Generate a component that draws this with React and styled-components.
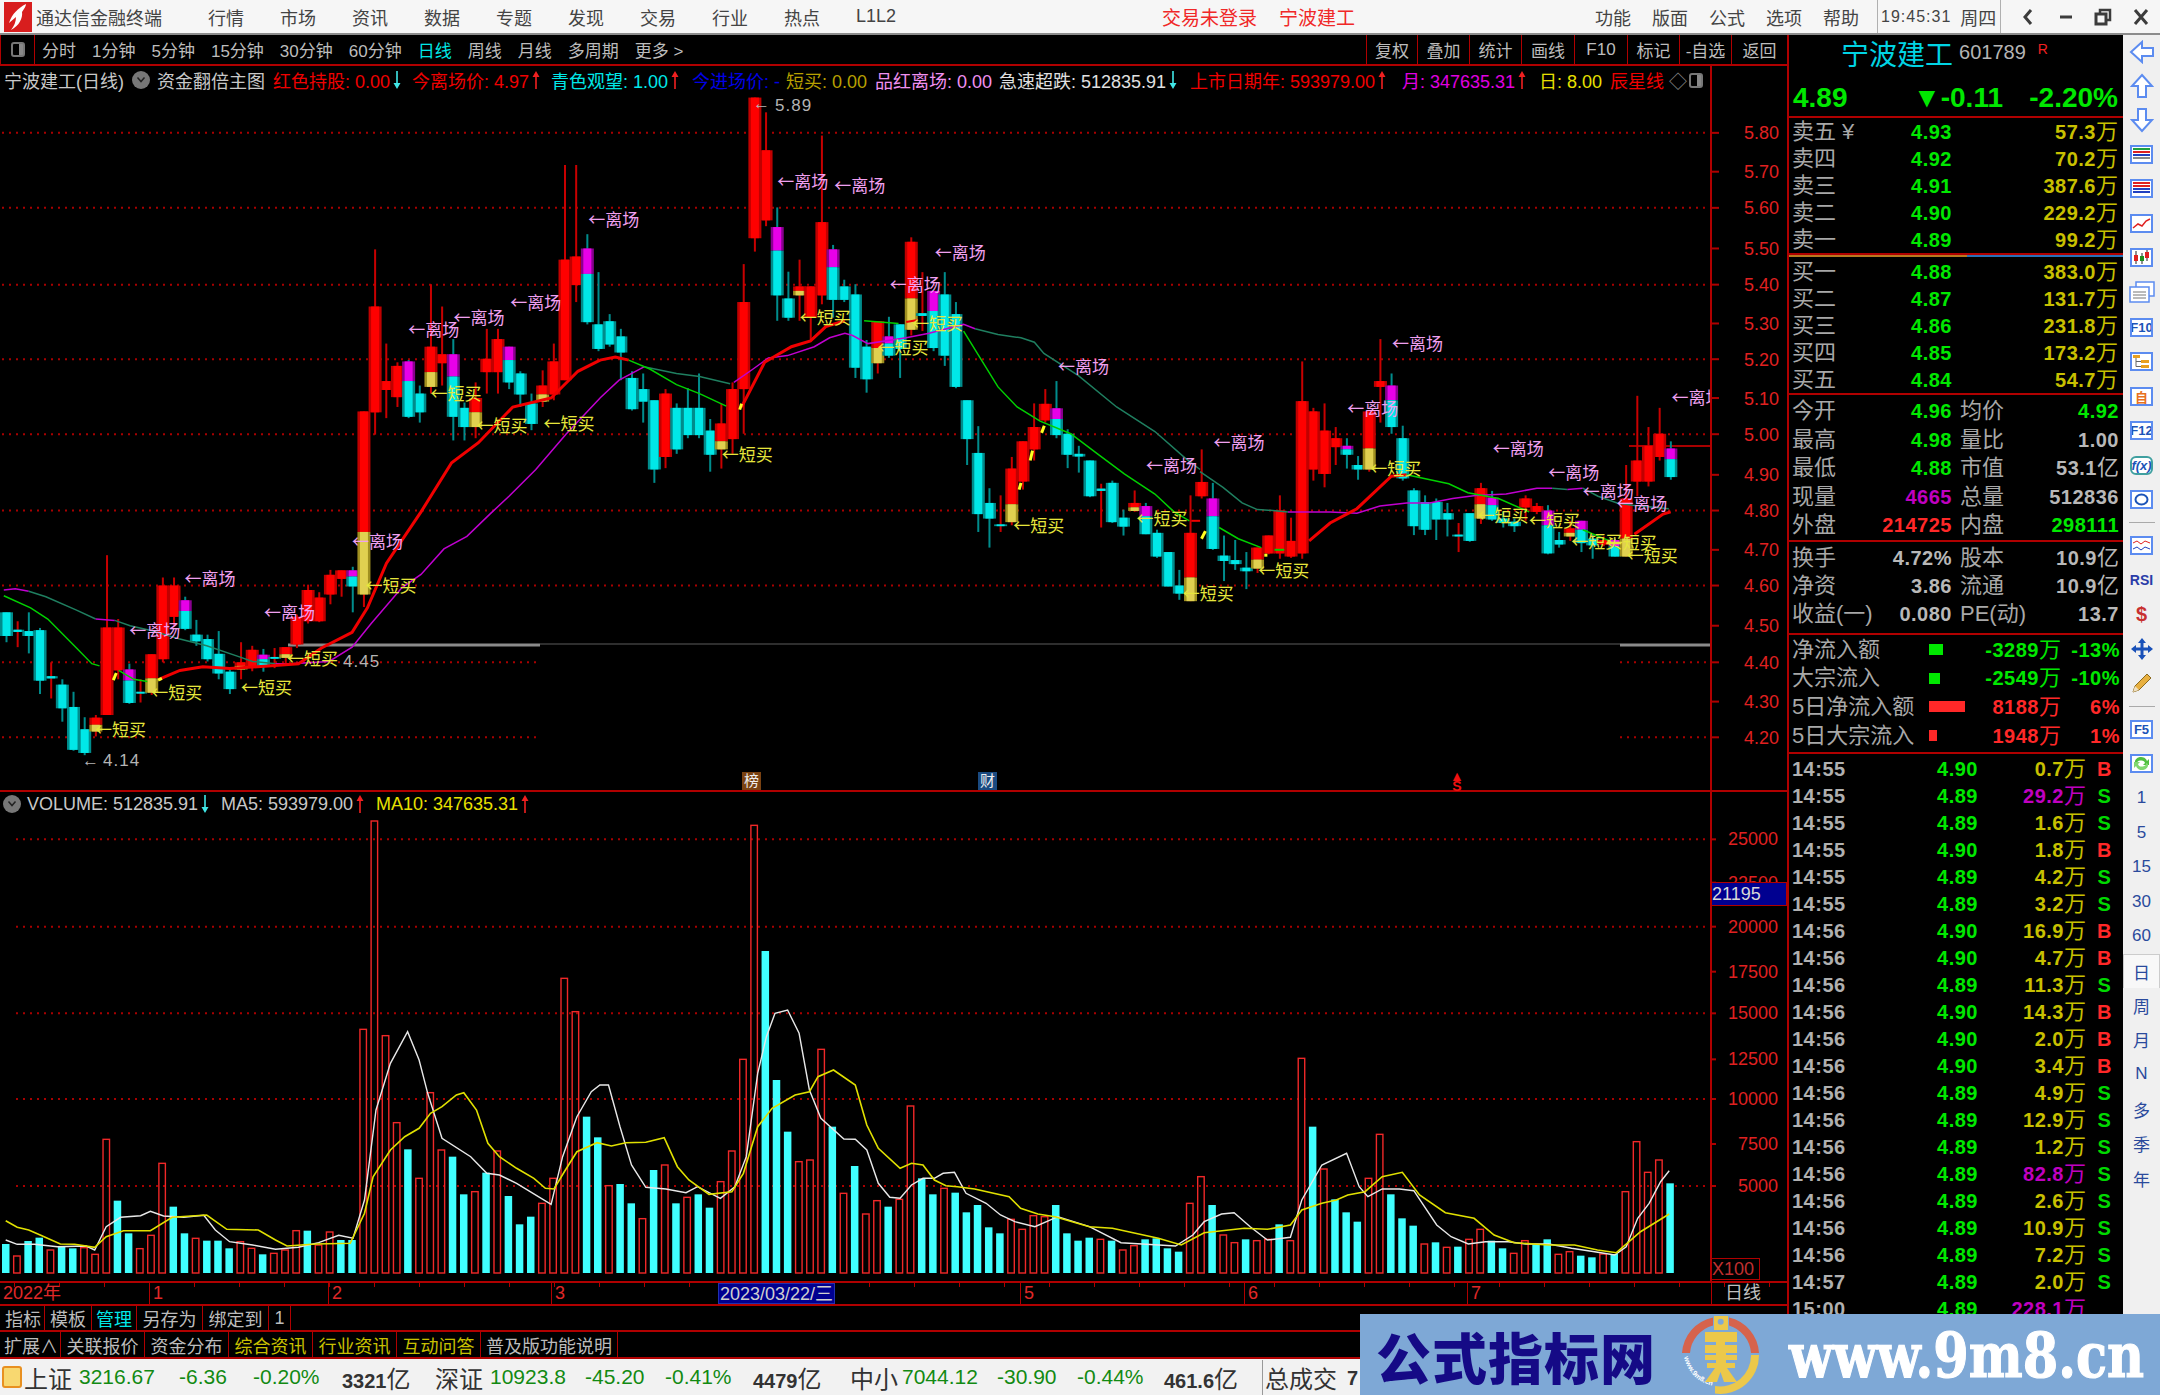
import React from "react";
import styled, { createGlobalStyle } from "styled-components";

const RED = "#b00000";
const CJK = '"Liberation Sans", "Noto Sans CJK SC", sans-serif';

const GlobalStyle = createGlobalStyle`
  html, body { margin: 0; padding: 0; background: #000; }
  body { font-family: ${CJK}; }
  * { box-sizing: border-box; }
`;

const Page = styled.div`
  position: relative;
  width: 2160px;
  height: 1395px;
  overflow: hidden;
  background: #000;
  display: flex;
  flex-direction: column;
`;

/* ---------- title bar ---------- */
const TitleBar = styled.div`
  height: 35px;
  flex: none;
  display: flex;
  align-items: center;
  background: #f6f6f6;
  border-bottom: 2px solid #8c8c8c;
  color: #444;
  font-size: 18px;
`;
const AppLogo = styled.div`
  width: 28px;
  height: 30px;
  margin-left: 4px;
  margin-right: 4px;
  flex: none;
`;
const AppName = styled.div`
  width: 150px;
  letter-spacing: 0;
`;
const MenuList = styled.div`
  display: flex;
  align-items: center;
  width: 700px;
  padding-left: 22px;
`;
const MenuItem = styled.div`
  width: 72px;
  text-align: left;
  flex: none;
`;
const LoginArea = styled.div`
  display: flex;
  gap: 22px;
  color: #f02828;
  font-size: 19px;
  margin-left: 276px;
  width: 433px;
`;
const SysMenu = styled.div`
  display: flex;
  gap: 21px;
  width: 282px;
`;
const Clock = styled.div`
  height: 33px;
  width: 124px;
  flex: none;
  display: flex;
  align-items: center;
  gap: 9px;
  padding-left: 3px;
  border-left: 1px solid #b0b0b0;
  border-right: 1px solid #b0b0b0;
  font-size: 16px;
  letter-spacing: 1px;
  span:last-child { font-size: 18px; letter-spacing: 0; }
`;
const WindowBtns = styled.div`
  flex: 1;
  display: flex;
  justify-content: space-around;
  align-items: center;
  padding-left: 8px;
`;

/* ---------- main layout ---------- */
const Main = styled.div`
  flex: 1;
  min-height: 0;
  display: flex;
`;
const LeftCol = styled.div`
  width: 1787px;
  flex: none;
  display: flex;
  flex-direction: column;
`;
const ToolRow = styled.div`
  height: 31px;
  flex: none;
  display: flex;
  align-items: center;
  border-bottom: 2px solid ${RED};
  color: #bcbcbc;
  font-size: 17px;
`;
const PanelToggle = styled.div`
  width: 35px;
  height: 29px;
  flex: none;
  border-right: 1px solid ${RED};
  border-left: 1px solid ${RED};
  display: flex;
  align-items: center;
  justify-content: center;
`;
const ToggleGlyph = styled.span`
  display: block;
  width: 14px;
  height: 15px;
  border: 2px solid #777;
  border-radius: 3px;
  background: linear-gradient(90deg, transparent 55%, #888 55%);
`;
const PeriodList = styled.div`
  flex: 1;
  display: flex;
  gap: 16px;
  padding-left: 7px;
`;
const Period = styled.span`
  color: ${(p) => (p.$on ? "#00e8e8" : "inherit")};
  white-space: nowrap;
`;
const ToolBtns = styled.div`
  display: flex;
  height: 29px;
`;
const ToolBtn = styled.div`
  width: ${(p) => p.$w}px;
  border-left: 1px solid ${RED};
  display: flex;
  align-items: center;
  justify-content: center;
`;

/* ---------- price and volume panes ---------- */
const ChartPane = styled.div`
  position: relative;
  height: ${(p) => p.$h}px;
  flex: none;
  border-bottom: 2px solid ${RED};
  svg { display: block; }
`;
const Legend = styled.div`
  position: absolute;
  left: ${(p) => p.$left}px;
  top: ${(p) => p.$top}px;
  right: 0;
  height: 26px;
  display: flex;
  align-items: center;
  font-size: 18px;
  white-space: nowrap;
  color: #c8c8c8;
`;
const LegendItem = styled.span`
  width: ${(p) => p.$w}px;
  flex: none;
  color: ${(p) => p.$c || "inherit"};
  display: inline-flex;
  align-items: center;
`;
const Circle = styled.span`
  width: 18px;
  height: 18px;
  border-radius: 50%;
  background: #777;
  color: #222;
  display: inline-flex;
  align-items: center;
  justify-content: center;
`;

const Gridline = styled.line`
  stroke: #a80000;
  stroke-width: 2;
  stroke-dasharray: 2 5;
`;
const AxisLabel = styled.text`
  fill: ${(p) => p.$c || "#e02020"};
  font-family: "Liberation Sans", sans-serif;
  font-size: ${(p) => p.$s || 19}px;
  dominant-baseline: central;
`;
const Mark = styled.text`
  font-family: "Noto Sans CJK SC", sans-serif;
  font-size: 17px;
  dominant-baseline: central;
  fill: ${(p) => (p.$kind === "buy" ? "#e6e63c" : "#f0a0f0")};
`;
const LowHigh = styled.text`
  font-family: "Liberation Sans", sans-serif;
  font-size: 17px;
  letter-spacing: 1px;
  dominant-baseline: central;
  fill: #b4b4b4;
`;
const NewsTag = styled.div`
  position: absolute;
  left: ${(p) => p.$x}px;
  bottom: 0;
  width: 19px;
  height: 18px;
  background: ${(p) => p.$bg};
  color: #eee;
  font-size: 15px;
  line-height: 18px;
  text-align: center;
`;
const DollarTag = styled.div`
  position: absolute;
  left: 1450px;
  bottom: -1px;
  color: #f01010;
  font-size: 14px;
  font-weight: bold;
  line-height: 10px;
  text-align: center;
`;
const PriceTag = styled.div`
  position: absolute;
  left: 1711px;
  top: 90px;
  width: 76px;
  height: 24px;
  background: #000090;
  border: 1px solid ${RED};
  color: #d8d8d8;
  font-size: 18px;
  line-height: 22px;
`;
const ScaleTag = styled.div`
  position: absolute;
  left: 1711px;
  bottom: 1px;
  width: 49px;
  height: 22px;
  border: 1px solid ${RED};
  color: #c03030;
  font-size: 18px;
  line-height: 20px;
`;

/* ---------- date axis and tab rows ---------- */
const DateAxis = styled.div`
  position: relative;
  height: 23px;
  flex: none;
  display: flex;
  border-bottom: 2px solid ${RED};
  background: repeating-linear-gradient(90deg, ${RED} 0 1px, transparent 1px 45px) 14px 0 / 100% 4px no-repeat;
`;
const DateCell = styled.div`
  width: ${(p) => p.$w}px;
  flex: none;
  padding-left: 3px;
  border-left: ${(p) => (p.$first ? "none" : `1px solid ${RED}`)};
  color: ${(p) => p.$c || "#e02828"};
  font-size: 18px;
  line-height: 21px;
`;
const DateCursor = styled.div`
  position: absolute;
  left: 718px;
  top: 0;
  width: 117px;
  height: 21px;
  background: #000090;
  color: #d0d0d0;
  font-size: 18px;
  line-height: 20px;
  text-align: center;
  border: 1px solid #2030b0;
  white-space: nowrap;
`;
const TabRow = styled.div`
  height: ${(p) => p.$h}px;
  flex: none;
  display: flex;
  padding-left: 2px;
  border-bottom: 2px solid ${RED};
`;
const Tab = styled.div`
  width: ${(p) => p.$w}px;
  flex: none;
  display: flex;
  align-items: center;
  justify-content: center;
  border-right: 1px solid ${RED};
  color: ${(p) => p.$c || "#bcbcbc"};
  font-size: 18px;
`;

/* ---------- quote panel ---------- */
const Panel = styled.div`
  width: 336px;
  flex: none;
  border-left: 2px solid ${RED};
  display: flex;
  flex-direction: column;
  color: #a8a8a8;
  overflow: hidden;
`;
const NameRow = styled.div`
  height: 31px;
  flex: none;
  display: flex;
  align-items: center;
  padding: 4px 0 0 52px;
  gap: 6px;
`;
const StockName = styled.span`
  color: #00d4e4;
  font-size: 28px;
`;
const StockCode = styled.span`
  color: #b4b4b4;
  font-size: 20px;
`;
const RBadge = styled.span`
  color: #f02020;
  font-size: 14px;
  margin: -8px 0 0 6px;
`;
const QuoteRow = styled.div`
  height: 52px;
  flex: none;
  padding: 16px 5px 0 4px;
  border-bottom: 2px solid ${RED};
  color: #00e800;
  font-size: 28px;
  font-weight: bold;
  display: grid;
  grid-template-columns: 120px 1fr 110px;
  span:nth-child(3) { text-align: right; }
`;
const Section = styled.div`
  flex: none;
  padding-top: ${(p) => p.$pt || 0}px;
  padding-bottom: ${(p) => p.$pb || 0}px;
  border-bottom: ${(p) => (p.$noline ? "none" : `2px solid ${RED}`)};
`;
const SplitLine = styled.div`
  height: 2px;
  flex: none;
  background: linear-gradient(90deg, #b87a20 0 178px, #2a70b8 178px);
`;
const Row = styled.div`
  height: ${(p) => p.$h}px;
  display: grid;
  grid-template-columns: ${(p) => p.$cols};
  align-items: center;
  padding-left: 3px;
  font-size: 22px;
  line-height: 22px;
  white-space: nowrap;
`;
const Num = styled.span`
  color: ${(p) => p.$c || "#00e800"};
  font-family: "Liberation Sans", "Noto Sans CJK SC", sans-serif;
  font-size: 20px;
  font-weight: bold;
  letter-spacing: 0.5px;
  text-align: ${(p) => p.$align || "right"};
  justify-self: ${(p) => (p.$align === "left" ? "start" : p.$align === "center" ? "center" : "end")};
  padding-right: ${(p) => p.$pr || 0}px;
  i {
    font-style: normal;
    font-weight: normal;
    font-size: 22px;
    letter-spacing: 0;
  }
`;
const FlowBar = styled.span`
  display: block;
  height: 11px;
  background: ${(p) => p.$c};
`;

/* ---------- right icon strip ---------- */
const Strip = styled.div`
  flex: 1;
  background: #f0f0f0;
  display: flex;
  flex-direction: column;
  align-items: center;
  color: #2a4a9c;
`;
const StripCell = styled.div`
  height: ${(p) => p.$h || 34.55}px;
  width: 100%;
  flex: none;
  display: flex;
  align-items: center;
  justify-content: center;
  font-size: 17px;
  ${(p) => p.$on && `background:#f8f8f8;border:1px solid #ccc;border-bottom:none;`}
`;
const StripSep = styled.div`
  width: 26px;
  height: 1px;
  margin: 5px 0;
  flex: none;
  background: #aaa;
`;
const IconBox = styled.span`
  width: 23px;
  height: 19px;
  background: #fff;
  border: 2px solid ${(p) => p.$bc || "#5c8cf0"};
  border-radius: ${(p) => p.$r || 0}px;
  display: flex;
  align-items: center;
  justify-content: center;
  font-size: 13px;
  color: ${(p) => p.$c || "#1c54b8"};
  font-weight: bold;
  font-style: ${(p) => (p.$italic ? "italic" : "normal")};
  overflow: hidden;
`;
const BoldGlyph = styled.span`
  color: ${(p) => p.$c};
  font-size: ${(p) => p.$s || 14}px;
  font-weight: bold;
`;

/* ---------- status bar and watermark ---------- */
const StatusBar = styled.div`
  height: 36px;
  flex: none;
  background: #f2f2f2;
  display: flex;
  align-items: center;
  padding-left: 2px;
  font-size: 24px;
  color: #333;
  white-space: nowrap;
`;
const StatusIcon = styled.span`
  width: 20px;
  height: 22px;
  margin-right: 2px;
  flex: none;
  border: 2px solid #e89020;
  border-radius: 3px;
  background: #f8d870;
`;
const StatusCell = styled.span`
  width: ${(p) => p.$w}px;
  flex: none;
  color: ${(p) => p.$c || "inherit"};
  font-size: ${(p) => p.$s || 24}px;
  border-left: ${(p) => (p.$divider ? "1px solid #999" : "none")};
  padding-left: ${(p) => (p.$divider ? 2 : 0)}px;
  b {
    font-size: 20px;
    font-family: "Liberation Sans", sans-serif;
  }
`;
const Watermark = styled.div`
  position: absolute;
  right: 0;
  bottom: 0;
  width: 800px;
  height: 81px;
  background: #7ea8d6;
  display: flex;
  align-items: center;
  padding-left: 16px;
`;
const WmTitle = styled.div`
  width: 284px;
  flex: none;
  color: #150a86;
  font-family: "Noto Sans CJK SC", sans-serif;
  font-size: 55px;
  font-weight: 900;
  letter-spacing: 1px;
  line-height: 70px;
  white-space: nowrap;
`;
const WmUrl = styled.div`
  margin-left: 9px;
  color: #fff;
  font-family: "DejaVu Serif", serif;
  font-weight: bold;
  font-size: 51px;
  -webkit-text-stroke: 1px #fff;
  transform: scaleY(1.2);
  white-space: nowrap;
`;

/* ---------- chart data, read off the picture ---------- */
const STEP = 11.17;
const cx = (i) => 6.5 + i * STEP;
const py = (Y) => 90 + Y / 2.24;
const vy = (Y) => 790 + Y / 3;

// [bodyTop, bodyBottom, wickTop, wickBottom, kind, split]
// c cyan, r red, m cyan with magenta head, y red with yellow foot, d thin doji
const CANDLES = [
  [1170,1223,1170,1237,"c"],[1209,1214,1190,1248,"d"],[1212,1223,1170,1262,"c"],[1210,1323,1205,1353,"c"],
  [1313,1318,1282,1363,"d"],[1332,1385,1320,1415,"c"],[1382,1478,1348,1480,"c"],[1432,1485,1405,1490,"c"],
  [1406,1437,1400,1448,"y",1422],[1204,1400,1042,1400,"r"],[1204,1300,1185,1320,"r"],[1298,1373,1285,1375,"m",1323],
  [1348,1352,1320,1372,"d"],[1264,1350,1264,1355,"y",1318],[1110,1275,1092,1282,"r"],[1110,1180,1092,1200,"r"],
  [1143,1207,1135,1210,"m",1167],[1220,1235,1187,1245,"c"],[1230,1275,1220,1280,"c"],[1263,1307,1212,1320,"c"],
  [1303,1342,1295,1353,"c"],[1282,1298,1237,1320,"y",1290],[1254,1292,1245,1302,"r"],[1265,1292,1252,1303,"m",1275],
  [1270,1274,1250,1295,"d"],[1248,1272,1248,1285,"y",1264],[1180,1242,1175,1250,"r"],[1120,1190,1108,1195,"r"],
  [1137,1190,1125,1192,"r"],[1086,1130,1075,1152,"r"],[1076,1095,1076,1135,"r"],[1076,1112,1068,1170,"m",1090],
  [720,1130,720,1158,"y",990],[485,722,357,772,"r"],[652,672,568,735,"r"],[618,688,610,710,"r"],
  [608,732,605,735,"m",652],[680,722,662,745,"c"],[575,665,435,680,"y",632],[592,612,485,662,"r"],
  [592,732,558,785,"m",642],[712,755,700,785,"c"],[690,755,655,780,"y",722],[602,632,535,680,"r"],
  [558,632,535,680,"r"],[575,655,575,670,"m",605],[635,682,630,710,"c"],[702,748,680,762,"c"],
  [662,698,628,710,"y",682],[608,682,568,695,"r"],[380,650,168,650,"r"],[373,437,168,475,"r"],
  [355,520,323,525,"m",412],[525,580,408,585,"c"],
  // second stretch
  [518,570,502,575,"c"],[552,588,535,650,"c"],[645,715,630,718,"c"],[670,698,635,745,"c"],
  [695,850,695,880,"c"],[680,822,670,847,"r"],[712,805,702,815,"c"],[712,773,668,780,"c"],
  [712,773,635,780,"c"],[763,817,737,855,"c"],[747,805,703,848,"y",787],[670,782,655,815,"r"],
  [475,670,390,770,"r"],[17,332,17,362,"r"],[135,292,50,305,"r"],[307,460,263,517,"m",360],
  [467,510,407,517,"c"],[440,460,380,517,"y",450],[440,510,440,558,"r"],[296,460,102,480,"r"],
  [357,470,347,510,"m",397],[440,470,425,475,"c"],[458,622,435,645,"c"],[575,648,560,678,"c"],
  [518,612,518,635,"y",578],[552,595,508,600,"m",568],[525,580,525,645,"c"],[340,537,330,550,"y",467],
  [500,506,408,540,"d"],[450,578,450,585,"m",495],[458,595,408,618,"c"],[502,665,475,668,"c"],
  [695,782,695,840,"c"],[813,950,753,990,"c"],[925,960,892,1025,"c"],[973,977,908,990,"d"],
  [848,968,822,975,"y",928],[787,877,787,895,"r"],[755,805,702,830,"r"],[703,740,670,745,"r"],
  [713,773,652,780,"m",737],[770,817,760,847,"c"],[815,821,797,857,"c"],[830,910,830,912,"c"],
  [893,898,882,980,"d"],[880,968,875,970,"c"],[958,978,940,998,"c"],[925,943,897,945,"y",935],
  [932,995,925,995,"m",955],[992,1045,985,1048,"c"],[1035,1112,1035,1112,"c"],[1110,1128,1075,1142,"c"],
  [992,1145,908,1145,"y",1092],
  // third stretch
  [878,910,805,915,"r"],[915,1028,880,1030,"m",955],[1043,1055,998,1100,"c"],[1053,1062,1008,1075,"c"],
  [1070,1078,1035,1118,"c"],[1025,1072,1025,1082,"y",1052],[998,1038,998,1040,"r"],[942,1038,908,1050,"r"],
  [1010,1045,958,1048,"r"],[697,1038,608,1050,"r"],[720,850,712,875,"r"],[763,860,702,890,"r"],
  [780,800,755,840,"r"],[797,817,780,848,"m",805],[840,850,820,873,"c"],[720,850,720,855,"y",803],
  [652,665,558,745,"r"],[662,755,635,770,"m",695],[780,870,752,875,"c"],[897,977,892,997,"c"],
  [923,985,908,997,"c"],[923,962,915,1008,"c"],[948,962,925,1000,"c"],[996,1000,970,1035,"d"],
  [948,1010,948,1012,"c"],[892,960,880,972,"y",928],[913,962,898,965,"m",930],[960,970,945,980,"c"],
  [967,977,960,990,"c"],[915,935,908,965,"r"],[932,945,925,950,"r"],[942,1038,930,1040,"m",975],
  [1008,1018,990,1025,"c"],[982,1000,965,1010,"y",992],[965,1015,965,1035,"m",985],[1005,1020,995,1050,"c"],
  [1008,1018,1000,1022,"r"],[1008,1045,1005,1045,"m",1022],[915,1045,840,1045,"y",1005],[830,877,685,910,"r"],
  [797,877,755,888,"r"],[770,822,712,830,"r"],[803,867,787,873,"m",827],
];

// top of each volume bar, zoom units; negative = cyan bar, positive = hollow red
const VOLUME = [
  -1362,1398,-1353,-1343,1380,-1370,-1375,1373,1393,1048,-1232,-1330,1376,1336,1120,-1250,-1330,1345,-1352,-1352,
  -1375,1355,1375,-1393,1390,1380,1322,-1322,1365,1326,-1350,-1350,718,93,737,998,-1078,1165,908,1080,
  -1100,-1213,1205,-1148,1083,-1218,-1303,-1280,1240,1165,565,665,-980,-1042,1187,-1182,-1240,1286,-1140,1125,
  -1240,1222,-1213,-1253,1175,1083,808,106,-483,-870,-1025,1115,1110,778,-1010,1210,-1128,1272,1232,-1250,1228,
  948,-1165,-1213,1195,-1208,-1267,-1245,-1312,-1330,1288,1318,1277,1280,-1245,-1330,-1352,-1343,1348,-1352,1380,
  1367,-1348,-1345,-1375,-1385,1240,1160,-1245,1335,1358,-1348,1352,1348,-1303,1352,805,-1010,1137,-1228,-1267,
  -1295,1165,1033,-1213,-1285,-1307,1362,-1357,1372,-1370,1348,1318,-1352,-1375,1390,1352,-1365,-1348,1393,1385,
  -1397,-1402,1392,-1392,1205,1055,1147,1110,-1180,
];

const pts = (off, list) => {
  const out = [];
  for (let i = 0; i < list.length; i += 2) out.push(`${(off + list[i] / 2.613).toFixed(1)},${py(list[i + 1]).toFixed(1)}`);
  return out.join(" ");
};
const vpts = (a, b) => {
  const out = [];
  for (let i = 0; i < a.length; i += 2) out.push(`${(a[i] / 1.742).toFixed(1)},${vy(a[i + 1]).toFixed(1)}`);
  for (let i = 0; i < b.length; i += 2) out.push(`${(900 + b[i] / 1.742).toFixed(1)},${vy(b[i + 1]).toFixed(1)}`);
  return out.join(" ");
};

const DKG = "#1f7f60";
const MAG = "#c000d0";
const GRN = "#00d000";
const THICK = "#f00000";
const LINES = [
  [MAG,1.5,0,[10,1120,40,1117,75,1123]],
  [DKG,1.5,0,[75,1123,120,1135,200,1165,250,1185]],
  [MAG,1.5,0,[250,1185,300,1188]],
  [DKG,1.5,0,[300,1188,340,1200,400,1212,470,1230,540,1245,620,1268,660,1280,720,1285]],
  [MAG,1.5,0,[720,1285,760,1285,860,1280,920,1248,970,1195,1050,1115,1100,1085,1160,1028,1220,1000,1280,950,1330,910,1400,850,1480,770,1568,690]],
  [MAG,1.5,600,[0,690,50,650,115,620]],
  [DKG,1.5,600,[115,620,200,635,260,642,340,658]],
  [MAG,1.5,600,[350,655,400,625,440,600,490,595,560,575,600,555,640,545,660,550,700,568,800,555,860,545,950,525,980,535]],
  [DKG,1.5,600,[980,535,1040,548,1100,555,1135,565,1160,590,1250,640,1350,710,1450,765,1530,825,1568,850]],
  [DKG,1.5,1200,[0,855,60,890,110,925,150,940,190,942,230,945]],
  [MAG,1.5,1200,[230,945,340,945,410,948,470,932,540,925,600,925,660,915,720,908,800,905,880,892,920,892]],
  [DKG,1.5,1200,[920,892,960,895]],
  [MAG,1.5,1200,[960,895,1000,892]],
  [DKG,1.5,1200,[1000,892,1040,910,1090,925,1130,930,1225,938]],

  [GRN,1.5,0,[10,1133,80,1160,125,1185,200,1250,240,1285,260,1290]],
  [GRN,1.5,0,[310,1300,350,1320,385,1325]],
  [THICK,3,0,[415,1320,470,1300,530,1292,600,1296,700,1290,780,1285,840,1250,920,1215,960,1160,1010,1060,1100,945,1180,835,1250,790,1340,710,1440,690,1510,630,1568,605]],
  [THICK,3,600,[0,605,40,598,75,605]],
  [GRN,1.5,600,[75,605,130,625,200,660,260,680,330,708]],
  [THICK,3,600,[370,710,430,610,500,575,550,562,590,530,640,517]],
  [GRN,1.5,600,[690,517,780,523]],
  [THICK,2,600,[800,520,830,515]],
  [GRN,1.5,600,[950,540,1040,665,1090,710,1150,742,1230,770,1300,815,1370,860,1450,905,1500,945,1540,965]],
  [THICK,2,600,[1545,965,1568,965]],
  [GRN,1.5,1200,[50,980,100,1005,160,1025]],
  [GRN,2,1200,[195,1030,220,1030]],
  [THICK,3,1200,[285,1010,340,970,410,938,500,865,540,862]],
  [GRN,1.5,1200,[540,862,650,882,700,902,780,915,860,945]],
  [GRN,1.5,1200,[1000,985,1070,1010]],
  [THICK,3,1200,[1135,995,1210,950,1230,945]],
  // short yellow ticks where the line turns
  ["#ffff20",3,0,[296,1322,304,1306]],
  ["#ffff20",3,0,[413,1322,423,1318]],
  ["#ffff20",3,600,[365,716,370,703]],
  ["#ffff20",3,600,[1095,895,1100,880]],
  ["#ffff20",3,600,[1124,830,1130,808]],
  ["#ffff20",3,600,[1154,768,1161,752]],
  ["#ffff20",3,1200,[4,1005,14,988]],
  ["#ffff20",3,1200,[168,1042,176,1042]],
];

const EXITS = [
  [0,482,1095],[0,338,1212],[0,690,1172],[0,920,1012],[0,1067,537],[0,1185,510],[0,1333,477],[0,1537,292],
  [600,463,205],[600,612,215],[600,875,365],[600,757,437],[600,1197,620],[600,1427,843],
  [1200,35,790],[1200,385,715],[1200,502,570],[1200,765,805],[1200,910,858],[1200,1000,900],[1200,1088,927],[1200,1232,690],
];
const BUYS = [
  [0,248,1433],[0,395,1350],[0,630,1340],[0,750,1275],[0,955,1112],[0,1125,680],[0,1245,753],[0,1420,748],
  [600,318,817],[600,522,510],[600,725,578],[600,815,525],[600,1080,977],[600,1402,960],
  [1200,-45,1128],[1200,152,1078],[1200,445,850],[1200,725,955],[1200,860,965],[1200,970,1012],[1200,1060,1015],[1200,1115,1043],
];

const PRICE_TICKS = ["5.80","5.70","5.60","5.50","5.40","5.30","5.20","5.10","5.00","4.90","4.80","4.70","4.60","4.50","4.40","4.30","4.20"];
const PRICE_Y = [96,183,264,355,436,523,603,690,771,862,942,1030,1110,1200,1282,1370,1450];
const FULL_GRID = [96,264,436,603,771,942,1110];

const Candle = ({ i, d }) => {
  const [top, bot, wt, wb, kind, split] = d;
  const x = cx(i);
  const isRed = kind === "r" || kind === "y";
  const wick = isRed ? "#c80000" : kind === "d" ? "#c80000" : "#008c8c";
  const y1 = py(top);
  const y2 = py(bot);
  const part = (a, b, edge, fill) => (
    <>
      <rect x={x - 6.5} y={a} width={13} height={b - a} fill={edge} />
      <rect x={x - 4} y={a} width={8} height={b - a} fill={fill} />
    </>
  );
  return (
    <g>
      <rect x={x - 1} y={py(wt)} width={2} height={py(wb) - py(wt)} fill={wick} />
      {kind === "c" && part(y1, y2, "#008c8c", "#00e8e8")}
      {kind === "d" && part(y1, y2, "#008c8c", "#00e8e8")}
      {kind === "r" && part(y1, y2, "#c00000", "#ff0000")}
      {kind === "m" && (
        <>
          {part(y1, py(split), "#8a0090", "#e800e8")}
          {part(py(split), y2, "#008c8c", "#00e8e8")}
        </>
      )}
      {kind === "y" && (
        <>
          {part(y1, py(split), "#c00000", "#ff0000")}
          {part(py(split), y2, "#a09020", "#e0d050")}
        </>
      )}
    </g>
  );
};

const PriceChart = () => (
  <svg width="1787" height="724" viewBox="0 66 1787 724">
    <defs>
      <clipPath id="plot">
        <rect x="0" y="66" width="1711" height="724" />
      </clipPath>
    </defs>
    {FULL_GRID.map((Y) => (
      <Gridline key={Y} x1="2" x2="1711" y1={py(Y)} y2={py(Y)} />
    ))}
    {[1282, 1450].map((Y) => (
      <g key={Y}>
        <Gridline x1="2" x2="540" y1={py(Y)} y2={py(Y)} />
        <Gridline x1="1620" x2="1711" y1={py(Y)} y2={py(Y)} />
      </g>
    ))}
    <line x1="288" x2="540" y1="645" y2="645" stroke="#8a8a8a" strokeWidth="3" />
    <line x1="540" x2="1620" y1="644" y2="644" stroke="#5c5c5c" strokeWidth="1" />
    <line x1="1620" x2="1711" y1="645" y2="645" stroke="#8a8a8a" strokeWidth="3" />
    <line x1="1629" x2="1711" y1="446" y2="446" stroke="#e00000" strokeWidth="1.5" />

    {CANDLES.map((d, i) => (
      <Candle key={i} i={i} d={d} />
    ))}
    {LINES.map(([c, w, off, list], i) => (
      <polyline key={i} points={pts(off, list)} fill="none" stroke={c} strokeWidth={w} />
    ))}

    <g clipPath="url(#plot)">
      {EXITS.map(([off, X, Y], i) => (
        <Mark key={i} x={off + X / 2.613} y={py(Y) - 1.5}>←离场</Mark>
      ))}
      {BUYS.map(([off, X, Y], i) => (
        <Mark key={i} $kind="buy" x={off + X / 2.613} y={py(Y) - 1.5}>←短买</Mark>
      ))}
      <LowHigh x="82" y={py(1503)}>←</LowHigh>
      <LowHigh x="103" y={py(1503)}>4.14</LowHigh>
      <LowHigh x="343" y={py(1280)}>4.45</LowHigh>
      <LowHigh x="753" y={py(30)}>←</LowHigh>
      <LowHigh x="775" y={py(35)}>5.89</LowHigh>
    </g>

    <rect x="1710" y="66" width="2" height="724" fill={RED} />
    {PRICE_TICKS.map((t, i) => (
      <g key={t}>
        <rect x="1711" y={py(PRICE_Y[i]) - 1} width="8" height="2" fill={RED} />
        <AxisLabel x="1744" y={py(PRICE_Y[i])} textLength="35" lengthAdjust="spacingAndGlyphs">{t}</AxisLabel>
      </g>
    ))}
  </svg>
);

const VOL_GRID = [148, 410, 670, 927, 1188];
const VOL_LABELS = [
  ["25000", 148], ["22500", 278], ["20000", 410], ["17500", 545], ["15000", 670], ["12500", 808], ["10000", 927], ["7500", 1062], ["5000", 1188],
];
const WHITE_A = [10,1350,30,1363,60,1363,100,1370,150,1368,165,1380,185,1310,210,1282,245,1277,262,1264,285,1278,320,1282,355,1276,375,1320,400,1355,440,1365,480,1378,520,1372,555,1358,590,1336,615,1345,635,1230,655,960,680,820,710,725,730,810,745,910,770,1045,820,1100,848,1150,870,1155,900,1180,960,1243,980,1100,1005,980,1030,905,1045,885,1060,885,1080,1010,1100,1125,1125,1192,1160,1197,1195,1208,1215,1190,1255,1225,1280,1190,1300,1100,1320,850,1335,740,1350,670,1372,660,1392,730,1410,900,1430,985,1470,1047,1490,1048,1510,1080,1530,1180,1550,1222,1568,1225];
const WHITE_B = [20,1185,40,1165,60,1165,75,1150,95,1147,115,1210,150,1240,175,1275,200,1295,235,1310,275,1280,330,1310,385,1358,480,1368,510,1335,530,1295,560,1272,582,1268,610,1310,640,1350,680,1342,700,1230,735,1125,778,1090,800,1190,815,1220,840,1197,870,1197,895,1202,935,1305,960,1340,990,1362,1020,1355,1060,1355,1090,1362,1130,1362,1170,1375,1210,1385,1245,1395,1265,1370,1285,1285,1305,1240,1325,1175,1340,1142];
const YELLOW_A = [10,1292,30,1312,50,1320,70,1335,105,1362,130,1363,165,1372,185,1340,215,1322,262,1322,300,1282,360,1275,395,1318,450,1320,480,1350,500,1368,550,1362,610,1360,635,1270,650,1160,680,1080,705,1040,730,1015,750,970,770,950,795,915,808,908,830,960,850,1060,870,1100,900,1135,930,1165,950,1195,965,1197,985,1140,1005,1085,1040,1058,1065,1068,1090,1058,1125,1057,1157,1043,1180,1130,1200,1170,1235,1213,1275,1205,1295,1150,1320,1010,1345,955,1385,915,1410,905,1425,860,1452,840,1490,885,1510,1005,1530,1075,1568,1135];
const YELLOW_B = [20,1120,40,1125,60,1170,80,1187,100,1190,130,1197,190,1220,210,1255,240,1272,270,1280,330,1310,370,1315,450,1345,490,1365,530,1328,600,1315,640,1318,680,1305,700,1260,735,1240,760,1230,780,1215,810,1205,840,1160,875,1147,905,1215,950,1268,1000,1285,1035,1335,1070,1358,1130,1365,1175,1365,1215,1380,1248,1388,1290,1325,1340,1272];

const VolumeChart = () => (
  <svg width="1787" height="489" viewBox="0 792 1787 489">
    {VOL_GRID.map((Y) => (
      <Gridline key={Y} x1="16" x2="1711" y1={vy(Y)} y2={vy(Y)} />
    ))}
    {VOLUME.map((v, i) => {
      const x = 5.5 + i * STEP;
      const top = vy(Math.abs(v));
      return v < 0 ? (
        <rect key={i} x={x - 3.5} y={top} width={7.5} height={1273 - top} fill="#40ffff" />
      ) : (
        <rect key={i} x={x - 3} y={top} width={6.5} height={1273 - top} fill="none" stroke="#f02828" strokeWidth="1.4" />
      );
    })}
    <polyline points={vpts(WHITE_A, WHITE_B)} fill="none" stroke="#e8e8e8" strokeWidth="1.4" />
    <polyline points={vpts(YELLOW_A, YELLOW_B)} fill="none" stroke="#e0e000" strokeWidth="1.6" />
    <rect x="1710" y="792" width="2" height="489" fill={RED} />
    {VOL_LABELS.map(([t, Y]) => (
      <g key={t}>
        <rect x="1711" y={vy(Y) - 1} width="5" height="2" fill={RED} />
        <AxisLabel $s={18} x="1778" textAnchor="end" y={vy(Y)}>{t}</AxisLabel>
      </g>
    ))}
  </svg>
);

/* ---------- small drawings ---------- */
const Arrow = ({ up, c }) => (
  <svg width="8" height="20" viewBox="0 0 8 20" style={{ marginLeft: 3 }}>
    {up ? <path d="M4 1 L7.5 7 L4.8 7 L4.8 19 L3.2 19 L3.2 7 L.5 7 Z" fill={c} /> : <path d="M4 19 L7.5 13 L4.8 13 L4.8 1 L3.2 1 L3.2 13 L.5 13 Z" fill={c} />}
  </svg>
);
const Chevron = () => (
  <svg width="10" height="8" viewBox="0 0 10 8">
    <path d="M1.5 1.5 L5 5.5 L8.5 1.5" fill="none" stroke="#222" strokeWidth="1.5" />
  </svg>
);
const BlockArrow = ({ rot }) => (
  <svg width="24" height="26" viewBox="0 0 24 26" style={{ transform: `rotate(${rot}deg)` }}>
    <path d="M12 2 L22 13 L16 13 L16 24 L8 24 L8 13 L2 13 Z" fill="#fff" stroke="#5c8cf0" strokeWidth="2" />
  </svg>
);
const WinIcon = ({ children }) => (
  <svg width="20" height="20" viewBox="0 0 20 20" fill="none" stroke="#3c3c3c" strokeWidth="3">
    {children}
  </svg>
);
const TableIcon = ({ colors }) => (
  <IconBox>
    <svg width="19" height="15" viewBox="0 0 19 15">
      {colors.map((c, i) => (
        <rect key={i} x="1" y={1 + i * 3} width="17" height="2" fill={c} />
      ))}
    </svg>
  </IconBox>
);
const LineIcon = () => (
  <IconBox>
    <svg width="19" height="15" viewBox="0 0 19 15">
      <path d="M1 12 L6 8 L10 10 L14 5 L18 3" fill="none" stroke="#e02020" strokeWidth="1.5" />
    </svg>
  </IconBox>
);
const CandleIcon = () => (
  <IconBox>
    <svg width="19" height="15" viewBox="0 0 19 15">
      <path d="M4 1V14M10 3V14M15 0V11" stroke="#222" />
      <rect x="2" y="5" width="4" height="6" fill="#e02020" />
      <rect x="8" y="6" width="4" height="5" fill="#209020" />
      <rect x="13" y="2" width="4" height="6" fill="#e02020" />
    </svg>
  </IconBox>
);
const WindowsIcon = () => (
  <svg width="26" height="22" viewBox="0 0 26 22">
    <rect x="7" y="1" width="18" height="14" fill="#fff" stroke="#5c8cf0" strokeWidth="1.5" />
    <rect x="1" y="6" width="19" height="15" fill="#fff" stroke="#5c8cf0" strokeWidth="1.5" />
    <path d="M4 11H17M4 14H17M4 17H17" stroke="#777" />
  </svg>
);
const TreeIcon = () => (
  <IconBox>
    <svg width="19" height="15" viewBox="0 0 19 15">
      <rect x="1" y="1" width="7" height="3" fill="#e8a020" />
      <rect x="9" y="6" width="8" height="3" fill="#e8a020" />
      <rect x="9" y="11" width="8" height="3" fill="#e8a020" />
      <path d="M4 4V12.5H9M4 7.5H9" stroke="#666" fill="none" />
    </svg>
  </IconBox>
);
const RingIcon = () => (
  <IconBox>
    <svg width="19" height="15" viewBox="0 0 19 15">
      <ellipse cx="9.5" cy="7.5" rx="6" ry="5" fill="none" stroke="#1c54b8" strokeWidth="2" />
    </svg>
  </IconBox>
);
const WaveIcon = () => (
  <IconBox>
    <svg width="19" height="15" viewBox="0 0 19 15">
      <path d="M1 5 L5 3 L9 6 L13 3 L18 5" fill="none" stroke="#e02020" />
      <path d="M1 11 L5 9 L9 12 L13 9 L18 11" fill="none" stroke="#2040c0" />
    </svg>
  </IconBox>
);
const MoveIcon = () => (
  <svg width="24" height="24" viewBox="0 0 24 24">
    <path d="M12 1 L16 6 L13.5 6 L13.5 10.5 L18 10.5 L18 8 L23 12 L18 16 L18 13.5 L13.5 13.5 L13.5 18 L16 18 L12 23 L8 18 L10.5 18 L10.5 13.5 L6 13.5 L6 16 L1 12 L6 8 L6 10.5 L10.5 10.5 L10.5 6 L8 6 Z" fill="#1850b8" />
  </svg>
);
const PencilIcon = () => (
  <svg width="24" height="24" viewBox="0 0 24 24">
    <path d="M3 21 L5 15 L17 3 L21 7 L9 19 Z" fill="#e8b040" stroke="#8a6a20" />
    <path d="M3 21 L5 15 L9 19 Z" fill="#f0e0c0" />
  </svg>
);
const RefreshIcon = () => (
  <IconBox>
    <svg width="19" height="15" viewBox="0 0 19 15">
      <path d="M3 7 A6 5 0 0 1 15 5 L17 3 L17 9 L11 9 L13 7 A4 3 0 0 0 5 8 Z" fill="#50c040" />
      <path d="M16 8 A6 5 0 0 1 4 10 L2 12 L2 6 L8 6 L6 8 A4 3 0 0 0 14 7 Z" fill="#80d870" />
    </svg>
  </IconBox>
);

const AppMark = () => (
  <AppLogo>
    <svg width="28" height="30" viewBox="0 0 28 30">
      <rect x="0" y="0" width="28" height="30" fill="#d81e1e" />
      <path d="M22 2 C14 6 8 12 5 21 L12 15 C12 20 10 24 7 28 C15 24 19 16 18 10 C20 7 22 4 22 2 Z" fill="#fff" />
    </svg>
  </AppLogo>
);

const MedalLogo = () => (
  <svg width="120" height="81" viewBox="0 4 120 81" style={{ flex: "none" }}>
    <path d="M22 43 A38.5 38.5 0 0 1 53 7.5 L53 15.5 A31 31 0 0 0 30 43 Z" fill="#d6634c" />
    <path d="M99 43 A38.5 38.5 0 0 0 69 7.5 L69 15.5 A31 31 0 0 1 91 43 Z" fill="#d6634c" />
    <path d="M99 45 A38.5 38.5 0 0 1 55 83.5 L55 76 A31 31 0 0 0 91 45 Z" fill="#ecc84a" />
    <path id="medalRing" d="M24 47 A37 37 0 0 0 54 76" fill="none" />
    <text fontSize="7" fontWeight="bold" fontFamily="Liberation Sans, sans-serif" fill="#fff">
      <textPath href="#medalRing">www.9m8.cn</textPath>
    </text>
    <rect x="54" y="6" width="14" height="14" fill="#ecc84a" />
    <circle cx="60.7" cy="11.7" r="3" fill="#7ea8d6" />
    <rect x="45" y="22" width="32" height="21" fill="#ecc84a" />
    <rect x="45" y="32" width="11" height="3" fill="#7ea8d6" />
    <rect x="65" y="32" width="12" height="3" fill="#7ea8d6" />
    <rect x="56" y="43" width="10" height="15" fill="#ecc84a" />
    <rect x="45" y="45" width="32" height="5" fill="#ecc84a" />
    <rect x="47" y="53" width="28" height="5" fill="#ecc84a" />
    <path d="M55 58 L45 72 L57 72 L60.5 62 L64 72 L77 72 L67 58 Z" fill="#ecc84a" />
  </svg>
);

/* ---------- panel content ---------- */
const SELL = [
  ["卖五 ¥", "4.93", "57.3"], ["卖四", "4.92", "70.2"], ["卖三", "4.91", "387.6"], ["卖二", "4.90", "229.2"], ["卖一", "4.89", "99.2"],
];
const BUY = [
  ["买一", "4.88", "383.0"], ["买二", "4.87", "131.7"], ["买三", "4.86", "231.8"], ["买四", "4.85", "173.2"], ["买五", "4.84", "54.7"],
];
const YELLOWISH = "#c8c000";
const STATS = [
  ["今开", "4.96", "#00e800", "均价", "4.92", "#00e800"],
  ["最高", "4.98", "#00e800", "量比", "1.00", "#b8b8b8"],
  ["最低", "4.88", "#00e800", "市值", "53.1亿", "#b8b8b8"],
  ["现量", "4665", "#c000c0", "总量", "512836", "#b8b8b8"],
  ["外盘", "214725", "#ff2828", "内盘", "298111", "#00e800"],
];
const FUND = [
  ["换手", "4.72%", "股本", "10.9亿"],
  ["净资", "3.86", "流通", "10.9亿"],
  ["收益(一)", "0.080", "PE(动)", "13.7"],
];
const FLOW = [
  ["净流入额", 14, "#00e800", "-3289", "-13%"],
  ["大宗流入", 11, "#00e800", "-2549", "-10%"],
  ["5日净流入额", 36, "#ff2828", "8188", "6%"],
  ["5日大宗流入", 8, "#ff2828", "1948", "1%"],
];
const TRADES = [
  ["14:55","4.90","0.7","B"],["14:55","4.89","29.2","S",1],["14:55","4.89","1.6","S"],["14:55","4.90","1.8","B"],
  ["14:55","4.89","4.2","S"],["14:55","4.89","3.2","S"],["14:56","4.90","16.9","B"],["14:56","4.90","4.7","B"],
  ["14:56","4.89","11.3","S"],["14:56","4.90","14.3","B"],["14:56","4.90","2.0","B"],["14:56","4.90","3.4","B"],
  ["14:56","4.89","4.9","S"],["14:56","4.89","12.9","S"],["14:56","4.89","1.2","S"],["14:56","4.89","82.8","S",1],
  ["14:56","4.89","2.6","S"],["14:56","4.89","10.9","S"],["14:56","4.89","7.2","S"],["14:57","4.89","2.0","S"],
  ["15:00","4.89","228.1","",1],
];

const unit = (n, u) => (
  <>
    {n}
    <i>{u}</i>
  </>
);
const withYi = (s) => (s.endsWith("亿") ? unit(s.slice(0, -1), "亿") : s);

const Quote = () => (
  <Panel>
    <NameRow>
      <StockName>宁波建工</StockName>
      <StockCode>601789</StockCode>
      <RBadge>R</RBadge>
    </NameRow>
    <QuoteRow>
      <span>4.89</span>
      <span>▼-0.11</span>
      <span>-2.20%</span>
    </QuoteRow>
    <Section>
      {SELL.map(([a, b, c]) => (
        <Row key={a} $h={27} $cols="100px 60px 1fr">
          <span>{a}</span>
          <Num>{b}</Num>
          <Num $c={YELLOWISH} $pr={5}>{unit(c, "万")}</Num>
        </Row>
      ))}
    </Section>
    <SplitLine />
    <Section $pt={1}>
      {BUY.map(([a, b, c]) => (
        <Row key={a} $h={27} $cols="100px 60px 1fr">
          <span>{a}</span>
          <Num>{b}</Num>
          <Num $c={YELLOWISH} $pr={5}>{unit(c, "万")}</Num>
        </Row>
      ))}
    </Section>
    <Section $pt={2}>
      {STATS.map(([a, b, bc, d, e, ec]) => (
        <Row key={a} $h={28.5} $cols="100px 60px 8px 76px 1fr">
          <span>{a}</span>
          <Num $c={bc}>{b}</Num>
          <span />
          <span>{d}</span>
          <Num $c={ec} $pr={4}>{withYi(e)}</Num>
        </Row>
      ))}
    </Section>
    <Section $pt={2} $pb={5}>
      {FUND.map(([a, b, d, e]) => (
        <Row key={a} $h={28} $cols="100px 60px 8px 76px 1fr">
          <span>{a}</span>
          <Num $c="#b8b8b8">{b}</Num>
          <span />
          <span>{d}</span>
          <Num $c="#b8b8b8" $pr={4}>{withYi(e)}</Num>
        </Row>
      ))}
    </Section>
    <Section $pt={1} $pb={2}>
      {FLOW.map(([a, w, c, v, p]) => (
        <Row key={a} $h={28.6} $cols="137px 40px 92px 1fr">
          <span>{a}</span>
          <FlowBar $c={c} style={{ width: w }} />
          <Num $c={c}>{unit(v, "万")}</Num>
          <Num $c={c} $pr={3}>{p}</Num>
        </Row>
      ))}
    </Section>
    <Section $pt={2} $noline>
      {TRADES.map(([t, p, v, s, big], i) => (
        <Row key={i} $h={27} $cols="118px 68px 108px 1fr">
          <Num $c="#b0b0b0" $align="left">{t}</Num>
          <Num>{p}</Num>
          <Num $c={big ? "#c000c0" : YELLOWISH}>{unit(v, "万")}</Num>
          <Num $c={s === "B" ? "#ff2828" : "#00d800"} $align="center">{s}</Num>
        </Row>
      ))}
    </Section>
  </Panel>
);

const SideStrip = () => (
  <Strip>
    <StripCell $h={34}><BlockArrow rot={-90} /></StripCell>
    <StripCell $h={34}><BlockArrow rot={0} /></StripCell>
    <StripCell $h={34}><BlockArrow rot={180} /></StripCell>
    <StripCell><TableIcon colors={["#20a040", "#e02020", "#2040c0", "#888"]} /></StripCell>
    <StripCell><TableIcon colors={["#e02020", "#e02020", "#2040c0", "#2040c0"]} /></StripCell>
    <StripCell><LineIcon /></StripCell>
    <StripCell><CandleIcon /></StripCell>
    <StripCell><WindowsIcon /></StripCell>
    <StripCell><IconBox>F10</IconBox></StripCell>
    <StripCell><TreeIcon /></StripCell>
    <StripCell><IconBox $c="#e87020">自</IconBox></StripCell>
    <StripCell><IconBox>F12</IconBox></StripCell>
    <StripCell><IconBox $bc="#40a0a0" $r={6} $italic>f(x)</IconBox></StripCell>
    <StripCell><RingIcon /></StripCell>
    <StripSep />
    <StripCell><WaveIcon /></StripCell>
    <StripCell><BoldGlyph $c="#2a3ca8">RSI</BoldGlyph></StripCell>
    <StripCell><BoldGlyph $c="#c83030" $s={20}>$</BoldGlyph></StripCell>
    <StripCell><MoveIcon /></StripCell>
    <StripCell><PencilIcon /></StripCell>
    <StripSep />
    <StripCell><IconBox>F5</IconBox></StripCell>
    <StripCell><RefreshIcon /></StripCell>
    {["1", "5", "15", "30", "60"].map((t) => (
      <StripCell key={t}>{t}</StripCell>
    ))}
    <StripCell $on>日</StripCell>
    {["周", "月", "N", "多", "季", "年"].map((t) => (
      <StripCell key={t}>{t}</StripCell>
    ))}
  </Strip>
);

const MENUS = ["行情", "市场", "资讯", "数据", "专题", "发现", "交易", "行业", "热点", "L1L2"];
const PERIODS = ["分时", "1分钟", "5分钟", "15分钟", "30分钟", "60分钟", "日线", "周线", "月线", "多周期", "更多 >"];
const TOOLS = [["复权", 51], ["叠加", 52], ["统计", 52], ["画线", 53], ["F10", 53], ["标记", 52], ["-自选", 52], ["返回", 56]];
const DATES = [["2022年", 149], ["1", 179], ["2", 223], ["3", 218], ["", 251], ["5", 224], ["6", 223], ["7", 244]];
const TAB_TOP = [["指标", 43], ["模板", 47], ["管理", 45, "#00e8e8"], ["另存为", 66], ["绑定到", 66], ["1", 22]];
const TAB_BOTTOM = [
  ["扩展∧", 59], ["关联报价", 84], ["资金分布", 84], ["综合资讯", 84, "#c8c000"], ["行业资讯", 84, "#c8c000"], ["互动问答", 84, "#c8c000"], ["普及版功能说明", 137],
];

export default function App() {
  return (
    <Page>
      <GlobalStyle />
      <TitleBar>
        <AppMark />
        <AppName>通达信金融终端</AppName>
        <MenuList>
          {MENUS.map((m) => (
            <MenuItem key={m}>{m}</MenuItem>
          ))}
        </MenuList>
        <LoginArea>
          <span>交易未登录</span>
          <span>宁波建工</span>
        </LoginArea>
        <SysMenu>
          <span>功能</span>
          <span>版面</span>
          <span>公式</span>
          <span>选项</span>
          <span>帮助</span>
        </SysMenu>
        <Clock>
          <span>19:45:31</span>
          <span>周四</span>
        </Clock>
        <WindowBtns>
          <WinIcon><path d="M13 3 L7 10 L13 17" /></WinIcon>
          <WinIcon><path d="M4 10 H16" /></WinIcon>
          <WinIcon>
            <rect x="7" y="3" width="10" height="10" strokeWidth="2.5" />
            <rect x="3" y="7" width="10" height="10" strokeWidth="3" fill="#f6f6f6" />
          </WinIcon>
          <WinIcon><path d="M4 3 L16 17 M16 3 L4 17" /></WinIcon>
        </WindowBtns>
      </TitleBar>
      <Main>
        <LeftCol>
          <ToolRow>
            <PanelToggle><ToggleGlyph /></PanelToggle>
            <PeriodList>
              {PERIODS.map((p) => (
                <Period key={p} $on={p === "日线"}>{p}</Period>
              ))}
            </PeriodList>
            <ToolBtns>
              {TOOLS.map(([t, w]) => (
                <ToolBtn key={t} $w={w}>{t}</ToolBtn>
              ))}
            </ToolBtns>
          </ToolRow>
          <ChartPane $h={726}>
            <PriceChart />
            <Legend $left={4} $top={1}>
              <LegendItem $w={128}>宁波建工(日线)</LegendItem>
              <LegendItem $w={25}><Circle><Chevron /></Circle></LegendItem>
              <LegendItem $w={116}>资金翻倍主图</LegendItem>
              <LegendItem $w={139} $c="#f00000">红色持股: 0.00<Arrow c="#40e8e8" /></LegendItem>
              <LegendItem $w={139} $c="#f00000">今离场价: 4.97<Arrow up c="#f02020" /></LegendItem>
              <LegendItem $w={141} $c="#00e8e8">青色观望: 1.00<Arrow up c="#f02020" /></LegendItem>
              <LegendItem $w={94} $c="#0000e8">今进场价: -</LegendItem>
              <LegendItem $w={89} $c="#b8a000">短买: 0.00</LegendItem>
              <LegendItem $w={124} $c="#f090f0">品红离场: 0.00</LegendItem>
              <LegendItem $w={191} $c="#e0e0e0">急速超跌: 512835.91<Arrow c="#40e8e8" /></LegendItem>
              <LegendItem $w={212} $c="#f00000">上市日期年: 593979.00<Arrow up c="#f02020" /></LegendItem>
              <LegendItem $w={137} $c="#e000e0">月: 347635.31<Arrow up c="#f02020" /></LegendItem>
              <LegendItem $w={71} $c="#e8e000">日: 8.00</LegendItem>
              <LegendItem $w={59} $c="#f00000">辰星线</LegendItem>
              <LegendItem $w={20} $c="#888">◇</LegendItem>
              <LegendItem $w={20}><ToggleGlyph /></LegendItem>
            </Legend>
            <NewsTag $x={742} $bg="#7a4212">榜</NewsTag>
            <NewsTag $x={978} $bg="#1a4a80">财</NewsTag>
            <DollarTag>▲<br />S</DollarTag>
          </ChartPane>
          <ChartPane $h={491}>
            <VolumeChart />
            <Legend $left={3} $top={-1}>
              <LegendItem $w={24}><Circle><Chevron /></Circle></LegendItem>
              <LegendItem $w={194}>VOLUME: 512835.91<Arrow c="#40e8e8" /></LegendItem>
              <LegendItem $w={155}>MA5: 593979.00<Arrow up c="#f02020" /></LegendItem>
              <LegendItem $w={160} $c="#e8e000">MA10: 347635.31<Arrow up c="#f02020" /></LegendItem>
            </Legend>
            <PriceTag>21195</PriceTag>
            <ScaleTag>X100</ScaleTag>
          </ChartPane>
          <DateAxis>
            {DATES.map(([t, w], i) => (
              <DateCell key={i} $w={w} $first={i === 0}>{t}</DateCell>
            ))}
            <DateCell $w={76} $c="#c0c0c0">&nbsp;&nbsp;日线</DateCell>
            <DateCursor>2023/03/22/三</DateCursor>
          </DateAxis>
          <TabRow $h={26}>
            {TAB_TOP.map(([t, w, c]) => (
              <Tab key={t} $w={w} $c={c}>{t}</Tab>
            ))}
          </TabRow>
          <TabRow $h={27}>
            {TAB_BOTTOM.map(([t, w, c]) => (
              <Tab key={t} $w={w} $c={c}>{t}</Tab>
            ))}
          </TabRow>
        </LeftCol>
        <Quote />
        <SideStrip />
      </Main>
      <StatusBar>
        <StatusIcon />
        <StatusCell $w={55}>上证</StatusCell>
        <StatusCell $w={100} $s={21} $c="#128a12">3216.67</StatusCell>
        <StatusCell $w={74} $s={21} $c="#128a12">-6.36</StatusCell>
        <StatusCell $w={89} $s={21} $c="#128a12">-0.20%</StatusCell>
        <StatusCell $w={93}><b>3321</b>亿</StatusCell>
        <StatusCell $w={55}>深证</StatusCell>
        <StatusCell $w={95} $s={21} $c="#128a12">10923.8</StatusCell>
        <StatusCell $w={80} $s={21} $c="#128a12">-45.20</StatusCell>
        <StatusCell $w={88} $s={21} $c="#128a12">-0.41%</StatusCell>
        <StatusCell $w={97}><b>4479</b>亿</StatusCell>
        <StatusCell $w={52}>中小</StatusCell>
        <StatusCell $w={95} $s={21} $c="#128a12">7044.12</StatusCell>
        <StatusCell $w={80} $s={21} $c="#128a12">-30.90</StatusCell>
        <StatusCell $w={87} $s={21} $c="#128a12">-0.44%</StatusCell>
        <StatusCell $w={98}><b>461.6</b>亿</StatusCell>
        <StatusCell $w={85} $divider>总成交</StatusCell>
        <StatusCell $w={30}><b>7</b></StatusCell>
      </StatusBar>
      <Watermark>
        <WmTitle>公式指标网</WmTitle>
        <MedalLogo />
        <WmUrl>www.9m8.cn</WmUrl>
      </Watermark>
    </Page>
  );
}
